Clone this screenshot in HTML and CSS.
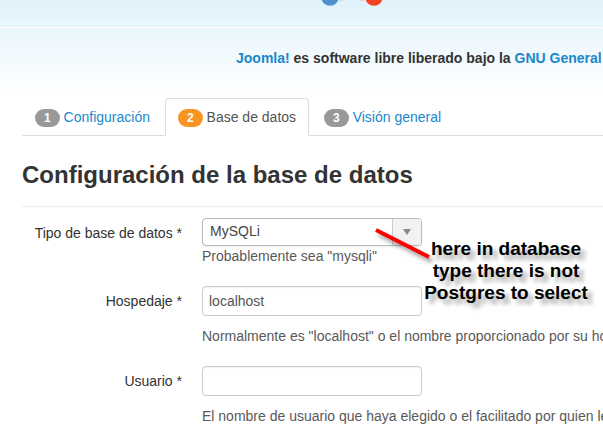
FILE: index.html
```html
<!DOCTYPE html>
<html lang="es">
<head>
<meta charset="utf-8">
<title>Configuración de la base de datos</title>
<link rel="stylesheet" href="styles.css">
</head>
<body>
<header class="header">
  <svg class="logo" width="64" height="7" viewBox="0 0 64 7" aria-hidden="true">
    <circle cx="10" cy="-3" r="8.7" fill="#5091cd"/>
    <circle cx="54" cy="-3" r="8.7" fill="#f44321"/>
    <ellipse cx="21" cy="0" rx="2.5" ry="1" fill="#c3dcf0"/>
    <ellipse cx="42" cy="0" rx="2.5" ry="1" fill="#efd0d2"/>
  </svg>
</header>
<main class="container">
  <p class="license"><a href="#">Joomla!</a> es software libre liberado bajo la <a href="#">GNU General</a></p>
  <nav>
    <ul class="tabs">
      <li><a class="tab" href="#"><span class="badge">1</span> Configuración</a></li>
      <li><a class="tab active" href="#"><span class="badge">2</span> Base de datos</a></li>
      <li><a class="tab" href="#"><span class="badge">3</span> Visión general</a></li>
    </ul>
  </nav>
  <form>
    <h1>Configuración de la base de datos</h1>
    <div class="row">
      <label for="db-type">Tipo de base de datos *</label>
      <div class="field">
        <div class="select-box">
          <select id="db-type"><option>MySQLi</option></select>
        </div>
        <p class="help">Probablemente sea "mysqli"</p>
        <div class="note">
          <svg class="pointer" width="64" height="40" viewBox="0 0 64 40" aria-hidden="true">
            <path d="M4 4L57 31" stroke="#f00" stroke-width="4"/>
          </svg>
          <p class="note-text">here in database<br>type there is not<br>Postgres to select</p>
        </div>
      </div>
    </div>
    <div class="row">
      <label for="host">Hospedaje *</label>
      <div class="field">
        <input id="host" type="text" value="localhost">
        <p class="help spaced">Normalmente es "localhost" o el nombre proporcionado por su ho</p>
      </div>
    </div>
    <div class="row">
      <label for="user">Usuario *</label>
      <div class="field">
        <input id="user" type="text">
        <p class="help spaced">El nombre de usuario que haya elegido o el facilitado por quien le</p>
      </div>
    </div>
  </form>
</main>
</body>
</html>
```
FILE: styles.css
```css
* {
  box-sizing: border-box;
}

body {
  margin: 0;
  overflow-x: hidden;
  background: #fff linear-gradient(#dff1fa, #e9f6fd 28px, #fff 96px) no-repeat;
  color: #333;
  font: 14px/20px "Liberation Sans", Arial, sans-serif;
}

a {
  color: #1a88cc;
  text-decoration: none;
}

p {
  margin: 0;
}

.header {
  height: 28px;
  border-bottom: 1px solid #fff;
  box-shadow: inset 0 -1px #eee;
}

.logo {
  display: block;
  margin-left: 320px;
}

.container {
  padding-left: 22px;
}

.license {
  padding: 20px 0 30px 214px;
  font-weight: bold;
  white-space: nowrap;
}

.tabs {
  display: flex;
  gap: 2px;
  margin: 0 0 19px;
  padding: 0;
  border-bottom: 1px solid #ddd;
  list-style: none;
}

.tab {
  display: block;
  margin-bottom: -1px;
  padding: 8px 12px;
  border: 1px solid transparent;
  border-radius: 4px 4px 0 0;
  white-space: nowrap;
}

.tab.active {
  border-color: #ddd #ddd #fff;
  background: #fff;
  color: #555;
}

.badge {
  display: inline-block;
  padding: 2px 9px;
  border-radius: 9px;
  background: #999;
  color: #fff;
  font-size: 12px;
  font-weight: bold;
  line-height: 14px;
}

.active .badge {
  background: #f89424;
}

h1 {
  margin: 0 0 11px;
  padding-bottom: 11px;
  border-bottom: 1px solid #eee;
  font-size: 24px;
  line-height: 40px;
  white-space: nowrap;
}

.row {
  display: grid;
  grid-template-columns: 160px minmax(0, 1fr);
  gap: 20px;
  margin-bottom: 20px;
}

.row label {
  padding-top: 5px;
  text-align: right;
}

.field {
  position: relative;
}

.select-box {
  position: relative;
  width: 220px;
}

.select-box::before {
  content: "";
  position: absolute;
  inset: 1px 1px 1px auto;
  width: 28px;
  border-left: 1px solid #ccc;
  border-radius: 0 3px 3px 0;
  background: #f2f2f2;
}

.select-box::after {
  content: "";
  position: absolute;
  top: 11px;
  right: 11px;
  border: solid transparent;
  border-width: 6px 4px 0;
  border-top-color: #888;
}

select,
input {
  display: block;
  width: 220px;
  height: 30px;
  margin: 0;
  padding: 4px 6px;
  border: 1px solid #ccc;
  border-radius: 4px;
  background: #fff;
  box-shadow: inset 0 1px 1px rgba(0, 0, 0, 0.06);
  color: #555;
  font: inherit;
}

select {
  height: 28px;
  padding: 1px 7px 3px;
  border-color: #bbb;
  box-shadow: 0 1px 2px rgba(0, 0, 0, 0.08);
  color: #444;
  appearance: none;
}

.help {
  color: #595959;
  white-space: nowrap;
}

.help.spaced {
  margin-top: 10px;
}

.note {
  position: absolute;
  top: 8px;
  left: 170px;
  z-index: 1;
}

.pointer {
  display: block;
  filter: drop-shadow(3px 4px 2px rgba(0, 0, 0, 0.4));
}

.note-text {
  position: absolute;
  top: 12px;
  left: 40px;
  width: 188px;
  color: #000;
  font-size: 19px;
  font-weight: bold;
  line-height: 22px;
  text-align: center;
  text-shadow: 5px 5px 4px rgba(0, 0, 0, 0.35);
}
```
